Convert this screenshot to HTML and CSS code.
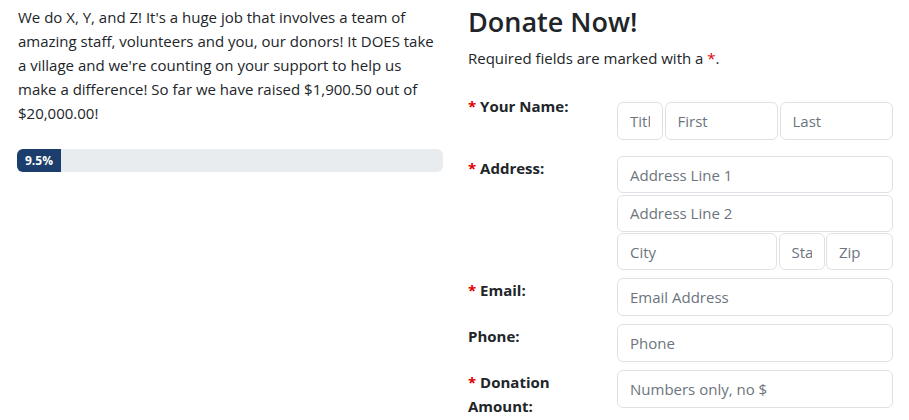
FILE: index.html
```html
<!DOCTYPE html>
<html lang="en">
<head>
<meta charset="utf-8">
<title>Donate</title>
<link rel="stylesheet" href="styles.css">
</head>
<body>
<div class="page">
  <div class="col-left">
    <p class="intro">We do X, Y, and Z! It's a huge job that involves a team of amazing staff, volunteers and you, our donors! It DOES take a village and we're counting on your support to help us make a difference! So far we have raised $1,900.50 out of $20,000.00!</p>
    <div class="progress">
      <div class="progress-bar" style="width: 9.5%">9.5%</div>
    </div>
  </div>
  <div class="col-right">
    <h3 class="title">Donate Now!</h3>
    <p class="note">Required fields are marked with a <span class="req">*</span>.</p>
    <form class="form">
      <div class="row row-name">
        <label class="label"><span class="req">*</span> Your Name:</label>
        <div class="fields">
          <div class="line">
            <input class="input w-title" placeholder="Title">
            <input class="input grow" placeholder="First">
            <input class="input grow" placeholder="Last">
          </div>
        </div>
      </div>
      <div class="row">
        <label class="label"><span class="req">*</span> Address:</label>
        <div class="fields stack">
          <input class="input" placeholder="Address Line 1">
          <input class="input" placeholder="Address Line 2">
          <div class="line">
            <input class="input w-city" placeholder="City">
            <input class="input w-state" placeholder="State">
            <input class="input grow" placeholder="Zip">
          </div>
        </div>
      </div>
      <div class="row">
        <label class="label"><span class="req">*</span> Email:</label>
        <div class="fields"><input class="input" placeholder="Email Address"></div>
      </div>
      <div class="row">
        <label class="label">Phone:</label>
        <div class="fields"><input class="input" placeholder="Phone"></div>
      </div>
      <div class="row">
        <label class="label"><span class="req">*</span> Donation Amount:</label>
        <div class="fields"><input class="input" placeholder="Numbers only, no $"></div>
      </div>
    </form>
  </div>
</div>
</body>
</html>
```

FILE: styles.css
```css
* { box-sizing: border-box; }
html, body { margin: 0; padding: 0; background: #fff; }
body {
  font-family: "Open Sans", "Noto Sans", sans-serif;
  font-size: 15px;
  line-height: 24px;
  color: #212529;
}
.page {
  display: flex;
  gap: 25px;
  padding: 5px 16px 0 18px;
}
.col-left { width: 425px; flex: none; }
.col-right { flex: 1; min-width: 0; }
.intro { margin: 0 0 24px; }
.progress {
  height: 23px;
  background: #e9ecef;
  border-radius: 6px;
  overflow: hidden;
  display: flex;
  margin-left: -1px;
}
.progress-bar {
  background: #1b3e6c;
  color: #fff;
  font-size: 12px;
  font-weight: 700;
  display: flex;
  align-items: center;
  justify-content: center;
  white-space: nowrap;
  padding: 0 8px;
  min-width: max-content;
}
.title {
  margin: 0 0 7px;
  font-size: 27px;
  line-height: 34px;
  font-weight: 600;
}
.note { margin: 0 0 24px; }
.req { color: #e00000; }
.form { display: flex; flex-direction: column; gap: 8px; }
.row { display: flex; gap: 12px; }
.row-name { margin-bottom: 8px; }
.row-name .fields { padding-top: 8px; }
.label {
  width: 137px;
  flex: none;
  font-weight: 700;
}
.fields { flex: 1; min-width: 0; }
.stack { display: flex; flex-direction: column; gap: 1.5px; }
.line { display: flex; gap: 1.5px; }
.input {
  display: block;
  width: 100%;
  height: 38px;
  padding: 6px 12px;
  font: inherit;
  color: #212529;
  background: #fff;
  border: 1px solid #dee2e6;
  border-radius: 6px;
  outline: none;
}
.stack .input { height: 37px; }
.line .input { width: auto; min-width: 0; }
.input::placeholder { color: #6c757d; opacity: 1; }
.w-title { flex: 0 0 46px; }
.w-city { flex: 0 0 160px; }
.w-state { flex: 0 0 46px; }
.grow { flex: 1 1 0; }
```
